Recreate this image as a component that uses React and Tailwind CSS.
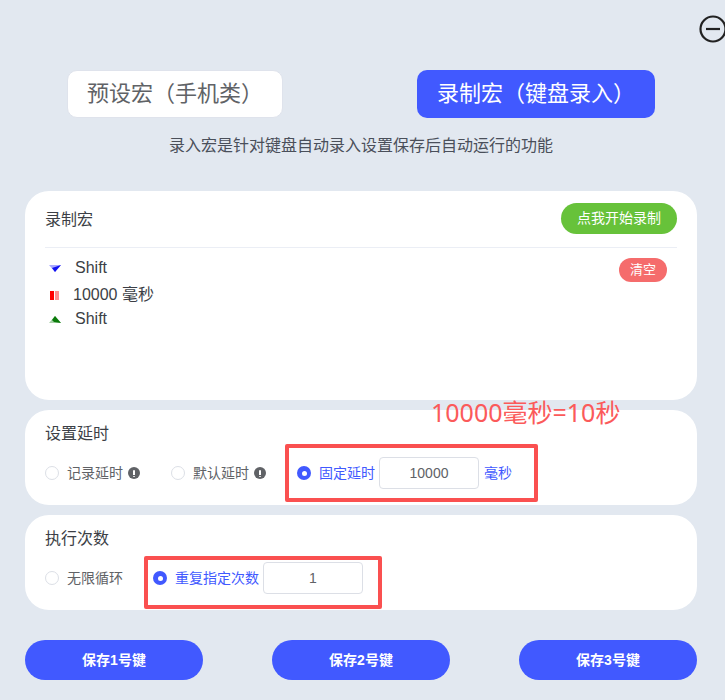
import React from 'react';

function Radio({ checked, label }) {
  return (
    <div className="flex items-center">
      {checked ? (
        <span className="w-[14px] h-[14px] rounded-full bg-[#4159ff] flex items-center justify-center shrink-0">
          <span className="w-[5px] h-[5px] rounded-full bg-white" />
        </span>
      ) : (
        <span className="w-[14px] h-[14px] rounded-full bg-white border border-[#dcdfe6] shrink-0" />
      )}
      <span className={`ml-2 text-[14px] ${checked ? 'text-[#4159ff]' : 'text-[#606266]'}`}>{label}</span>
    </div>
  );
}

function Info() {
  return (
    <span className="ml-[5px] w-[12px] h-[12px] rounded-full bg-[#606266] flex items-center justify-center">
      <span className="w-[2px] h-[7px] bg-white rounded-sm relative">
        <span className="absolute left-0 bottom-[1px] w-[2px] h-[1px] bg-[#606266]" />
      </span>
    </span>
  );
}

function NumberBox({ value, className }) {
  return (
    <div className={`h-[32px] bg-white border border-[#dcdfe6] rounded flex items-center justify-center text-[14px] text-[#606266] ${className}`}>
      {value}
    </div>
  );
}

function Arrow({ type }) {
  if (type === 'pause') {
    return (
      <svg width="9" height="9" viewBox="0 0 9 9">
        <rect x="0" y="0" width="4" height="9" fill="#f00" />
        <rect x="5" y="0" width="4" height="9" fill="#ff8f8f" />
      </svg>
    );
  }
  if (type === 'down') {
    return (
      <svg width="12" height="7" viewBox="0 0 12 7">
        <polygon points="0,0 12,0 6,7" fill="#a9a9ff" />
        <polygon points="3,3 12,0 6,7" fill="#1010f0" />
      </svg>
    );
  }
  return (
    <svg width="12" height="7" viewBox="0 0 12 7">
      <polygon points="0,7 12,7 6,0" fill="#a5d0a5" />
      <polygon points="3,4 6,0 12,7 5,6" fill="#0a7a0a" />
    </svg>
  );
}

function SaveButton({ n }) {
  return (
    <button className="w-[178px] h-[40px] rounded-full bg-[#4159ff] text-white text-[14px] font-bold">
      保存{n}号键
    </button>
  );
}

export default function App() {
  return (
    <div className="relative w-[725px] h-[700px] overflow-hidden bg-[#e2e8f0] font-['Liberation_Sans','Noto_Sans_CJK_SC',sans-serif]">
      {/* top right zoom icon, cut off by the window */}
      <svg className="absolute left-[699px] top-[15px]" width="28" height="28" viewBox="0 0 28 28" fill="none">
        <circle cx="14" cy="14" r="12.5" stroke="#222" strokeWidth="2.2" />
        <line x1="7" y1="14" x2="21" y2="14" stroke="#222" strokeWidth="2.2" />
      </svg>

      <div className="pt-[70px] pl-[67px] flex items-start">
        <div className="w-[216px] h-[48px] pb-[2px] bg-white rounded-[10px] border border-[#dfe3ec] pl-[19px] flex items-center text-[22px] text-[#606266] whitespace-nowrap">
          预设宏（手机类）
        </div>
        <div className="ml-[134px] w-[238px] h-[48px] pb-[2px] bg-[#4159ff] rounded-[10px] pl-[20px] flex items-center text-[22px] text-white whitespace-nowrap">
          录制宏（键盘录入）
        </div>
      </div>

      <p className="mt-[17px] pl-[169px] text-[16px] leading-[22px] text-[#4a4f5a]">录入宏是针对键盘自动录入设置保存后自动运行的功能</p>

      <div className="ml-[25px] w-[672px] mt-[34px] flex flex-col gap-[10px]">
        <section className="h-[209px] bg-white rounded-[24px] px-[20px]">
          <div className="h-[57px] flex items-center justify-between border-b border-[#ebeef5]">
            <span className="pt-[2px] text-[16px] text-[#3c3f46]">录制宏</span>
            <button className="w-[116px] h-[31px] -mt-[1px] rounded-full bg-[#67c23a] text-white text-[14px]">点我开始录制</button>
          </div>
          <div className="relative pt-[9px] text-[16px] text-[#3c3f46]">
            <div className="flex items-center h-[22px]">
              <span className="w-[30px] pl-[4px] flex"><Arrow type="down" /></span>Shift
            </div>
            <div className="flex items-center h-[22px] mt-[5px]">
              <span className="w-[28px] pl-[5px] flex"><Arrow type="pause" /></span>10000 毫秒
            </div>
            <div className="flex items-center h-[22px] mt-[2px]">
              <span className="w-[30px] pl-[4px] flex"><Arrow type="up" /></span>Shift
            </div>
            <span className="absolute right-[10px] top-[10px] w-[48px] h-[24px] rounded-full bg-[#f56c6c] text-white text-[13px] flex items-center justify-center">清空</span>
          </div>
        </section>

        <section className="h-[95px] bg-white rounded-[24px] px-[20px] pt-[14px]">
          <div className="text-[16px] leading-[20px] text-[#3c3f46]">设置延时</div>
          <div className="mt-[13px] flex items-center h-[32px]">
            <Radio label="记录延时" />
            <Info />
            <div className="w-[31px]" />
            <Radio label="默认延时" />
            <Info />
            <div className="w-[31px]" />
            <Radio checked label="固定延时" />
            <NumberBox value="10000" className="ml-[4px] w-[100px]" />
            <span className="ml-[5px] text-[14px] text-[#4159ff]">毫秒</span>
          </div>
        </section>

        <section className="h-[95px] bg-white rounded-[24px] px-[20px] pt-[14px]">
          <div className="text-[16px] leading-[20px] text-[#3c3f46]">执行次数</div>
          <div className="mt-[13px] flex items-center h-[32px]">
            <Radio label="无限循环" />
            <div className="w-[30px]" />
            <Radio checked label="重复指定次数" />
            <NumberBox value="1" className="ml-[4px] w-[100px]" />
          </div>
        </section>
      </div>

      <div className="ml-[25px] w-[672px] mt-[30px] flex justify-between">
        <SaveButton n={1} />
        <SaveButton n={2} />
        <SaveButton n={3} />
      </div>

      {/* red annotations drawn over the screenshot */}
      <span className="absolute left-[431px] top-[396px] text-[25px] leading-[32px] text-[#fb5a5a] whitespace-nowrap font-['Noto_Sans','Noto_Sans_CJK_SC',sans-serif]">10000毫秒=10秒</span>
      <div className="absolute left-[285px] top-[444px] w-[253px] h-[58px] border-[4px] border-[#fa5050] rounded-[2px]" />
      <div className="absolute left-[144px] top-[556px] w-[238px] h-[53px] border-[4px] border-[#fa5050] rounded-[2px]" />
    </div>
  );
}
